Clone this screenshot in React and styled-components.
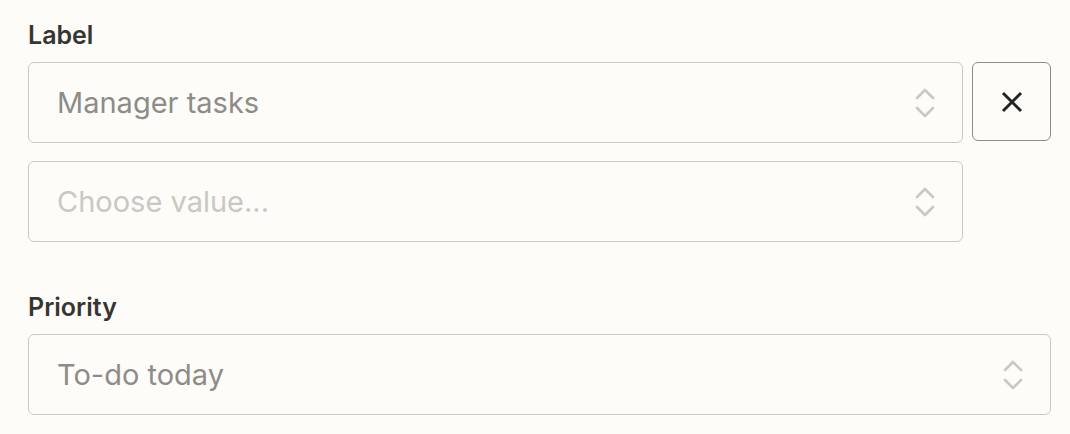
import React from 'react';
import styled, { createGlobalStyle } from 'styled-components';

const GlobalStyle = createGlobalStyle`
    html, body {
        margin: 0;
        background: #fdfcf8;
    }
    body {
        font-family: Inter, "Noto Sans", sans-serif;
    }
`

const Form = styled.div`
    display: flex;
    flex-direction: column;
    gap: 50px;
    padding: 20px 19px 0 28px;
    width: 1023px;
`

const Field = styled.div`
    display: flex;
    flex-direction: column;
`

const FieldLabel = styled.div`
    font-size: 25px;
    font-weight: 600;
    line-height: 30px;
    color: #363532;
    margin-bottom: 12px;
`

const Rows = styled.div`
    display: flex;
    flex-direction: column;
    gap: 18px;
`

const Row = styled.div`
    display: flex;
    gap: 9px;
    padding-right: ${p => (p.$spare ? '88px' : '0')};
`

const Select = styled.div`
    flex: 1;
    height: 81px;
    box-sizing: border-box;
    border: 1px solid #cbcac6;
    border-radius: 6px;
    display: flex;
    align-items: center;
    justify-content: space-between;
    padding: 0 26px 0 28px;
    font-size: 29px;
    color: ${p => (p.$placeholder ? '#c9c8c4' : '#8d8c89')};
`

const RemoveButton = styled.button`
    width: 79px;
    height: 79px;
    flex: none;
    box-sizing: border-box;
    border: 1px solid #8d8c89;
    border-radius: 6px;
    background: transparent;
    display: flex;
    align-items: center;
    justify-content: center;
    padding: 0;
`

const Chevrons = () => (
    <svg width="22" height="32" viewBox="0 0 22 32" fill="none" stroke="#c9c8c4" strokeWidth="2.6" strokeLinecap="round" strokeLinejoin="round">
        <path d="M3 11 L11 3 L19 11" />
        <path d="M3 21 L11 29 L19 21" />
    </svg>
)

const Cross = () => (
    <svg width="22" height="22" viewBox="0 0 22 22" fill="none" stroke="#232322" strokeWidth="3">
        <path d="M2 2 L20 20 M20 2 L2 20" />
    </svg>
)

const App = () => {
    return (
        <>
            <GlobalStyle />
            <Form>
                <Field>
                    <FieldLabel>Label</FieldLabel>
                    <Rows>
                        <Row>
                            <Select>
                                Manager tasks
                                <Chevrons />
                            </Select>
                            <RemoveButton aria-label="Remove">
                                <Cross />
                            </RemoveButton>
                        </Row>
                        <Row $spare>
                            <Select $placeholder>
                                Choose value...
                                <Chevrons />
                            </Select>
                        </Row>
                    </Rows>
                </Field>
                <Field>
                    <FieldLabel>Priority</FieldLabel>
                    <Row>
                        <Select>
                            To-do today
                            <Chevrons />
                        </Select>
                    </Row>
                </Field>
            </Form>
        </>
    )
}

export default App;
